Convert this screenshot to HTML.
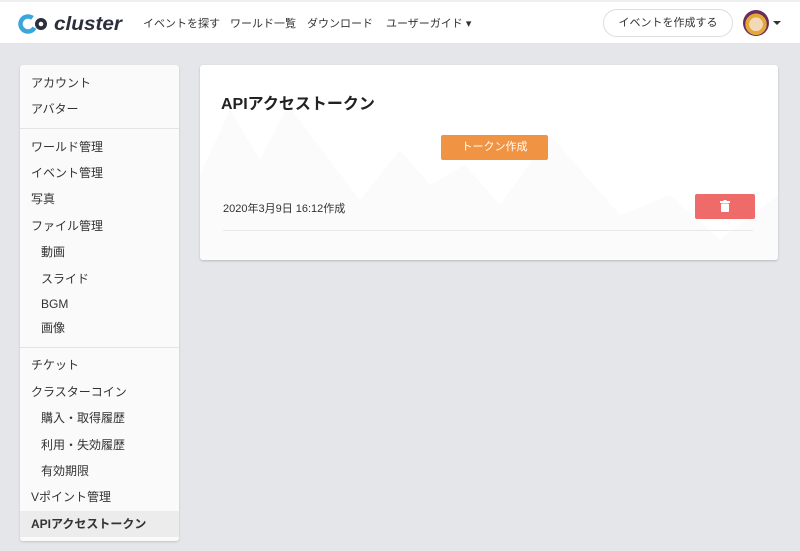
<!DOCTYPE html>
<html><head><meta charset="utf-8"><style>
*{margin:0;padding:0;box-sizing:border-box}
body{width:800px;height:551px;background:#e5e6ea;font-family:"Liberation Sans","Noto Sans CJK JP",sans-serif;color:#333;position:relative;overflow:hidden}
.hdr{position:absolute;left:0;top:0;width:800px;height:43px;background:#fff;border-top:2px solid #f0f0f2}
.nav{position:absolute;top:13px;font-size:11px;color:#333}
.logo{position:absolute;left:18px;top:10px}
.btn{position:absolute;left:603px;top:7px;width:130px;height:28px;border:1px solid #ddd;border-radius:14px;font-size:11px;text-align:center;line-height:26px;color:#333}
.av{position:absolute;left:743px;top:8px;width:26px;height:26px;border-radius:50%;background:radial-gradient(circle at 50% 55%,#f3d9b8 0 35%,#e2a93a 36% 55%,#6b2d5c 56%)}
.side{position:absolute;left:20px;top:65px;width:159px;height:476px;background:#fafafa;border-radius:3px;box-shadow:0 1px 2px rgba(0,0,0,.15)}
.it{position:absolute;left:11px;font-size:12px;color:#333;line-height:14px}
.sub{left:21px}
.div{position:absolute;left:0;width:159px;height:1px;background:#e3e3e3}
.card{position:absolute;left:200px;top:65px;width:578px;height:195px;background:#fff;border-radius:3px;box-shadow:0 1px 2px rgba(0,0,0,.2);overflow:hidden}
</style></head><body>
<div class="hdr">
<svg class="logo" width="110" height="24" viewBox="0 0 110 24"><circle cx="10" cy="12" r="7.5" fill="none" stroke="#3aa6dc" stroke-width="4.5" stroke-dasharray="36 12" transform="rotate(30 10 12)"/><circle cx="23" cy="12" r="6" fill="#2b2e3b"/><circle cx="23" cy="12" r="2.3" fill="#fff"/><text x="36" y="18" font-family="Liberation Sans,sans-serif" font-size="19" font-weight="bold" font-style="italic" fill="#2b2e3b" textLength="68" lengthAdjust="spacingAndGlyphs">cluster</text></svg>
<div class="nav" style="left:143px">イベントを探す</div>
<div class="nav" style="left:230px">ワールド一覧</div>
<div class="nav" style="left:307px">ダウンロード</div>
<div class="nav" style="left:386px">ユーザーガイド ▾</div>
<div class="btn">イベントを作成する</div>
<div class="av"></div>
<div style="position:absolute;left:773px;top:19px;border:4px solid transparent;border-top:4px solid #333;border-bottom:0"></div>
</div>
<div class="side">
<div class="it" style="top:11px">アカウント</div>
<div class="it" style="top:37px">アバター</div>
<div class="div" style="top:63px"></div>
<div class="it" style="top:75px">ワールド管理</div>
<div class="it" style="top:101px">イベント管理</div>
<div class="it" style="top:127px">写真</div>
<div class="it" style="top:154px">ファイル管理</div>
<div class="it sub" style="top:180px">動画</div>
<div class="it sub" style="top:207px">スライド</div>
<div class="it sub" style="top:232px">BGM</div>
<div class="it sub" style="top:256px">画像</div>
<div class="div" style="top:282px"></div>
<div class="it" style="top:293px">チケット</div>
<div class="it" style="top:320px">クラスターコイン</div>
<div class="it sub" style="top:346px">購入・取得履歴</div>
<div class="it sub" style="top:373px">利用・失効履歴</div>
<div class="it sub" style="top:399px">有効期限</div>
<div class="it" style="top:425px">Vポイント管理</div>
<div style="position:absolute;left:0;top:446px;width:159px;height:26px;background:#ececec"></div>
<div class="it" style="top:452px;font-weight:bold">APIアクセストークン</div>
</div>
<div class="card">
<svg style="position:absolute;left:0;top:0" width="578" height="195"><polygon points="0,195 0,110 30,45 60,95 88,40 160,135 200,85 230,120 265,100 300,140 350,70 420,150 470,130 520,175 578,130 578,195" fill="#fbfbfb"/></svg>
<div style="position:absolute;left:21px;top:25px;font-size:16px;font-weight:bold;color:#222">APIアクセストークン</div>
<div style="position:absolute;left:241px;top:70px;width:107px;height:25px;background:#f09443;border-radius:2px;color:#fff;font-size:11px;text-align:center;line-height:25px">トークン作成</div>
<div style="position:absolute;left:23px;top:135px;font-size:11px;color:#333">2020年3月9日 16:12作成</div>
<div style="position:absolute;left:495px;top:129px;width:60px;height:25px;background:#ee6b69;border-radius:2px"><svg style="position:absolute;left:25px;top:6px" width="10" height="12" viewBox="0 0 10 12"><rect x="0" y="1" width="10" height="2" fill="#fff"/><rect x="3.5" y="0" width="3" height="1.5" fill="#fff"/><rect x="1" y="3.5" width="8" height="8.5" rx="1" fill="#fff"/></svg></div>
<div style="position:absolute;left:23px;top:165px;width:530px;height:1px;background:#e8e8e8"></div>
</div>
</body></html>
